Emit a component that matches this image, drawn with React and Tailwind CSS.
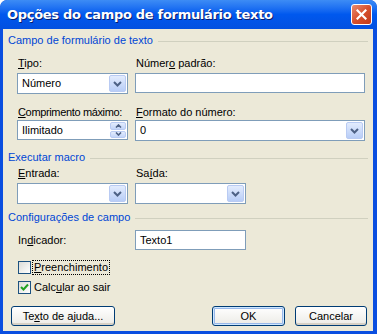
import React from 'react';

const ComboArrow = () => (
  <div className="w-[17px] h-full rounded-[2px] border border-[#b9cbf3] bg-gradient-to-b from-[#e3ecfd] to-[#b8cdf7] flex items-center justify-center">
    <svg width="9" height="6" viewBox="0 0 9 6">
      <path d="M1 1 L4.5 4.5 L8 1" fill="none" stroke="#4d6185" strokeWidth="2" />
    </svg>
  </div>
);

function Combo({ value = '', className = '' }) {
  return (
    <div className={`h-[21px] border border-[#7f9db9] bg-white flex items-stretch p-[1px] ${className}`}>
      <div className="flex-1 px-[3px] leading-[17px] text-black">{value}</div>
      <ComboArrow />
    </div>
  );
}

function Edit({ value = '', className = '' }) {
  return (
    <div className={`h-[20px] border border-[#7f9db9] bg-white px-[4px] leading-[18px] text-black ${className}`}>
      {value}
    </div>
  );
}

function Spin({ value }) {
  return (
    <div className="h-[20px] border border-[#7f9db9] bg-white flex items-stretch p-[1px]">
      <div className="flex-1 px-[3px] leading-[16px] text-black">{value}</div>
      <div className="w-[16px] flex flex-col gap-[1px]">
        <div className="flex-1 rounded-[2px] border border-[#b9cbf3] bg-gradient-to-b from-[#e3ecfd] to-[#c3d5f9] flex items-center justify-center">
          <svg width="7" height="4" viewBox="0 0 7 4">
            <path d="M1 3.5 L3.5 1 L6 3.5" fill="none" stroke="#4d6185" strokeWidth="1.6" />
          </svg>
        </div>
        <div className="flex-1 rounded-[2px] border border-[#b9cbf3] bg-gradient-to-b from-[#e3ecfd] to-[#c3d5f9] flex items-center justify-center">
          <svg width="7" height="4" viewBox="0 0 7 4">
            <path d="M1 0.5 L3.5 3 L6 0.5" fill="none" stroke="#4d6185" strokeWidth="1.6" />
          </svg>
        </div>
      </div>
    </div>
  );
}

function GroupHeader({ children, className = '' }) {
  return (
    <div className={`flex items-center gap-[5px] h-[13px] ${className}`}>
      <span className="text-[#0046d5] leading-[13px] whitespace-nowrap">{children}</span>
      <div className="flex-1 h-[1px] bg-[#d0d0bf] mt-[2px]" />
    </div>
  );
}

function Label({ children, className = '' }) {
  return <div className={`h-[13px] leading-[13px] pl-[1px] text-black whitespace-nowrap ${className}`}>{children}</div>;
}

function Check({ checked, focus, children, className = '' }) {
  return (
    <div className={`flex items-center h-[15px] ${className}`}>
      <div className="w-[13px] h-[13px] border border-[#1c5180] bg-gradient-to-br from-[#dcdcd7] to-white flex items-center justify-center">
        {checked && (
          <svg width="9" height="9" viewBox="0 0 9 9">
            <path d="M1 4 L3.5 6.5 L8 1.5" fill="none" stroke="#21a121" strokeWidth="2" />
          </svg>
        )}
      </div>
      <span className={`ml-[2px] px-[1px] leading-[13px] text-black ${focus ? 'outline outline-1 outline-dotted outline-black' : ''}`}>
        {children}
      </span>
    </div>
  );
}

function Button({ children, def, className = '' }) {
  return (
    <div className={`h-[20px] rounded-[3px] border border-[#003c74] bg-gradient-to-b from-white to-[#ecebe6] flex items-center justify-center text-black ${def ? 'shadow-[inset_0_0_0_1px_#cee7ff,inset_0_0_0_2px_#98b8ea]' : 'shadow-[inset_0_-2px_0_#d6d0c5]'} ${className}`}>
      {children}
    </div>
  );
}

export default function App() {
  return (
    <div className="w-[377px] h-[334px] bg-[#0a4ee0] rounded-t-[7px] flex flex-col font-['Liberation_Sans',Arial,sans-serif] text-[11px] overflow-hidden">
      <div className="h-[29px] flex items-center justify-between pl-[7px] pr-[5px] rounded-t-[7px] bg-gradient-to-b from-[#3d8cf5] via-[#0058ee] to-[#0250e0]">
        <span className="text-white font-bold text-[13px] font-['DejaVu_Sans',sans-serif] tracking-[-0.3px] [text-shadow:1px_1px_0_#0a1e6e]">
          Opções do campo de formulário texto
        </span>
        <div className="w-[21px] h-[21px] rounded-[3px] border border-white bg-gradient-to-br from-[#e98a6f] via-[#d7502c] to-[#c0391b] flex items-center justify-center">
          <svg width="11" height="11" viewBox="0 0 11 11">
            <path d="M1.5 1.5 L9.5 9.5 M9.5 1.5 L1.5 9.5" stroke="white" strokeWidth="2.2" strokeLinecap="square" />
          </svg>
        </div>
      </div>
      <div className="flex-1 mx-[3px] mr-[4px] mb-[3px] bg-[#ece9d8] flex flex-col px-[5px]">
        <GroupHeader className="mt-[5px]">Campo de formulário de texto</GroupHeader>

        <div className="mt-[10px] ml-[9px] grid grid-cols-[111px_230px] gap-x-[7px]">
          <Label><u>T</u>ipo:</Label>
          <Label>Númer<u>o</u> padrão:</Label>
          <Combo value="Número" className="mt-[3px]" />
          <Edit className="mt-[3px]" />
          <Label className="mt-[12px] tracking-[-0.35px]"><u>C</u>omprimento máximo:</Label>
          <Label className="mt-[12px]"><u>F</u>ormato do número:</Label>
          <div className="mt-[1px]"><Spin value="Ilimitado" /></div>
          <Combo value="0" className="mt-[1px]" />
        </div>

        <GroupHeader className="mt-[10px]">Executar macro</GroupHeader>

        <div className="mt-[3px] ml-[9px] grid grid-cols-[111px_111px] gap-x-[7px]">
          <Label><u>E</u>ntrada:</Label>
          <Label>Sa<u>í</u>da:</Label>
          <Combo className="mt-[3px]" />
          <Combo className="mt-[3px]" />
        </div>

        <GroupHeader className="mt-[7px]">Configurações de campo</GroupHeader>

        <div className="mt-[6px] ml-[9px] grid grid-cols-[111px_111px] gap-x-[7px] items-center">
          <Label>In<u>d</u>icador:</Label>
          <Edit value="Texto1" />
        </div>

        <Check focus className="mt-[10px] ml-[10px]"><u>P</u>reenchimento</Check>
        <Check checked className="mt-[5px] ml-[10px]">Calc<u>u</u>lar ao sair</Check>

        <div className="mt-[11px] flex items-center">
          <Button className="ml-[3px] w-[104px]">Te<u>x</u>to de ajuda...</Button>
          <div className="flex-1" />
          <Button def className="w-[73px]">OK</Button>
          <Button className="ml-[10px] w-[72px] mr-[1px]">Cancelar</Button>
        </div>
      </div>
    </div>
  );
}
